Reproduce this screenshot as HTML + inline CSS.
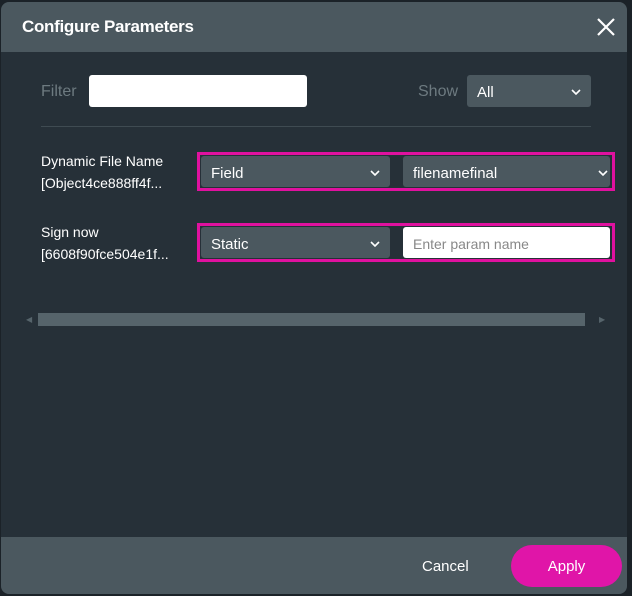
<!DOCTYPE html>
<html><head><style>
*{box-sizing:border-box;margin:0;padding:0}
body{width:632px;height:596px;background:#1b2228;font-family:"Liberation Sans",sans-serif;position:relative;overflow:hidden}
.dlg{position:absolute;left:1px;top:2px;width:626px;height:592px;background:#263038;border-radius:8px;overflow:hidden}
.hdr{position:absolute;left:0;top:0;width:100%;height:50px;background:#4b585f}
.hdr h1{position:absolute;left:21px;top:15px;font-size:17px;font-weight:bold;color:#fff;letter-spacing:-0.3px}
.x{position:absolute;left:596px;top:16px}
.a{position:absolute}
.lbl{color:#6d7a80;font-size:16px}
.sel{background:#4b585f;border-radius:3px;color:#fff;font-size:15px;padding-left:10px;padding-top:3px;display:flex;align-items:center}
.sel svg{position:absolute;right:10px;top:50%;margin-top:-2px}
.pink{border:3px solid #e0119f}
.txt{color:#fff;font-size:14px;line-height:22px}
.ftr{position:absolute;left:0;top:535px;width:100%;height:57px;background:#4b585f}
</style></head><body>
<div class="dlg">
 <div class="hdr"><h1>Configure Parameters</h1>
  <svg class="x" width="18" height="18" viewBox="0 0 18 18"><path d="M1 1L17 17M17 1L1 17" stroke="#fff" stroke-width="2.2"/></svg></div>
 <div class="a lbl" style="left:40px;top:81px">Filter</div>
 <div class="a" style="left:88px;top:73px;width:218px;height:32px;background:#fff;border-radius:3px"></div>
 <div class="a lbl" style="left:417px;top:81px">Show</div>
 <div class="a sel" style="left:466px;top:73px;width:124px;height:32px">All<svg width="10" height="6"><path d="M1 1L5 5L9 1" stroke="#fff" stroke-width="1.6" fill="none"/></svg></div>
 <div class="a" style="left:40px;top:124px;width:550px;height:1px;background:#3f4b52"></div>

 <div class="a txt" style="left:40px;top:148px">Dynamic File Name<br>[Object4ce888ff4f...</div>
 <div class="a pink" style="left:196px;top:150px;width:418px;height:39px"></div>
 <div class="a sel" style="left:200px;top:154px;width:189px;height:31px">Field<svg width="10" height="6"><path d="M1 1L5 5L9 1" stroke="#fff" stroke-width="1.6" fill="none"/></svg></div>
 <div class="a sel" style="left:402px;top:154px;width:207px;height:31px">filenamefinal<svg width="10" height="6" style="right:2px"><path d="M1 1L5 5L9 1" stroke="#fff" stroke-width="1.6" fill="none"/></svg></div>

 <div class="a txt" style="left:40px;top:219px">Sign now<br>[6608f90fce504e1f...</div>
 <div class="a pink" style="left:196px;top:221px;width:418px;height:39px"></div>
 <div class="a sel" style="left:200px;top:225px;width:189px;height:31px">Static<svg width="10" height="6"><path d="M1 1L5 5L9 1" stroke="#fff" stroke-width="1.6" fill="none"/></svg></div>
 <div class="a" style="left:402px;top:225px;width:207px;height:31px;background:#fff;border-radius:3px;color:#888;font-size:14px;padding:9px 10px 0">Enter param name</div>

 <div class="a" style="left:25px;top:313px;color:#56646b;font-size:8px">◀</div>
 <div class="a" style="left:37px;top:311px;width:547px;height:13px;background:#56646b"></div>
 <div class="a" style="left:598px;top:313px;color:#56646b;font-size:8px">▶</div>

 <div class="ftr">
  <div class="a" style="left:421px;top:21px;color:#fff;font-size:15px">Cancel</div>
  <div class="a" style="left:510px;top:8px;width:111px;height:42px;background:#e015a8;border-radius:21px;color:#fff;font-size:15px;text-align:center;line-height:44px">Apply</div>
 </div>
</div>
</body></html>
